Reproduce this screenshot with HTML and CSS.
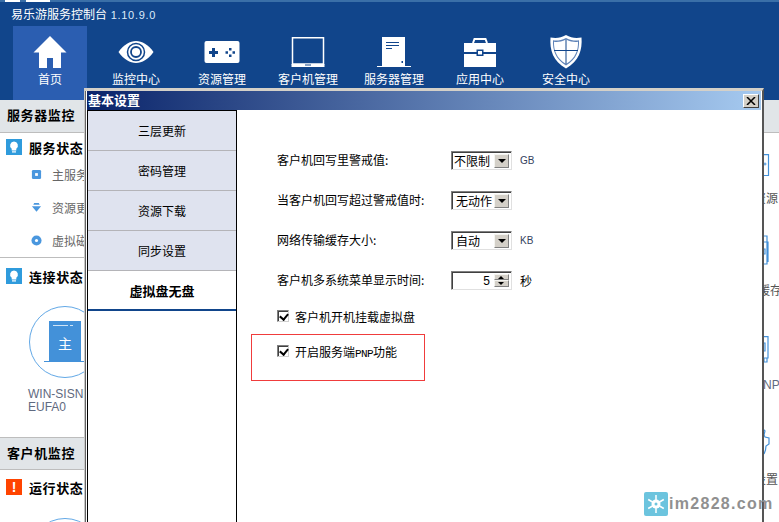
FILE: index.html
```html
<!DOCTYPE html>
<html lang="zh-CN">
<head>
<meta charset="utf-8">
<title>易乐游服务控制台</title>
<link rel="stylesheet" href="styles.css">
</head>
<body>
<div class="app">
  <header class="head">
    <div class="strip"><i class="strip-w a"></i><i class="strip-w b"></i></div>
    <div class="apptitle">易乐游服务控制台 <span class="ver">1.10.9.0</span></div>
    <nav class="nav">
      <a class="nav-item on">
        <svg class="nav-ic" viewBox="0 0 40 36"><path fill="#fff" d="M20 2 3.500 18.500H9V34H17V24H23V34H31V18.500H36.500Z"/></svg>
        <span>首页</span>
      </a>
      <a class="nav-item">
        <svg class="nav-ic" viewBox="0 0 40 36"><path fill="#fff" d="M2.500 18C8 10.500 14 7 20 7s12 3.500 17.500 11C32 25.500 26 29 20 29S8 25.500 2.500 18Z"/><circle cx="20" cy="18" r="8.500" fill="none" stroke="#11458b" stroke-width="1.500"/><circle cx="20" cy="18" r="5" fill="none" stroke="#11458b" stroke-width="1.800"/></svg>
        <span>监控中心</span>
      </a>
      <a class="nav-item">
        <svg class="nav-ic" viewBox="0 0 40 36"><rect x="2.500" y="7" width="35" height="22" rx="2" fill="#fff"/><path fill="#11458b" d="M10 14h3v3h3v3h-3v3h-3v-3H7v-3h3Z"/><path fill="#11458b" d="M27 14h2.500v2.500H27ZM27 20.500h2.500V23H27ZM23.500 17.300H26v2.500h-2.500ZM30.500 17.300H33v2.500h-2.500Z"/></svg>
        <span>资源管理</span>
      </a>
      <a class="nav-item">
        <svg class="nav-ic" viewBox="0 0 40 36"><path fill="none" stroke="#fff" stroke-width="1.500" d="M4.500 3.800H35.500V30H4.500Z"/><path fill="#fff" d="M3.500 30H36.500V33H3.500Z"/><path fill="#11458b" d="M17 30.500H23V31.500H17Z"/></svg>
        <span>客户机管理</span>
      </a>
      <a class="nav-item">
        <svg class="nav-ic" viewBox="0 0 40 36"><path fill="#fff" d="M8 3H31V32H8Z"/><path fill="#fff" d="M3 32H37V33H3Z"/><path fill="#11458b" d="M12 8H25V9H12ZM12 11H25V12H12ZM12 14H18V15H12ZM27.500 27H29V29H27.500Z"/></svg>
        <span>服务器管理</span>
      </a>
      <a class="nav-item">
        <svg class="nav-ic" viewBox="0 0 40 36"><path fill="none" stroke="#fff" stroke-width="2" d="M13 9 14.500 5H25.500L27 9"/><path fill="#fff" d="M4 9H36V18H23.500V15.500H16.500V18H4ZM4 20H16.500V22H23.500V20H36V33H4Z"/><path fill="#fff" d="M18 17H22V20.500H18Z"/></svg>
        <span>应用中心</span>
      </a>
      <a class="nav-item">
        <svg class="nav-ic" viewBox="0 0 40 36"><path fill="#fff" d="M20 1C25 4 30 4.500 35.500 3.500 36.500 16 33 27 20 34.500 7 27 3.500 16 4.500 3.500 10 4.500 15 4 20 1Z"/><path fill="#5f83b8" d="M20 4C25 6.500 29.500 7 33 6.300 33.500 16 30.500 25.500 20 31.500 9.500 25.500 6.500 16 7 6.300 10.500 7 15 6.500 20 4Z"/><path fill="#fff" d="M20 5.500C25 8 29 8.300 32 7.800 32.300 16 29.500 24.500 20 30 10.500 24.500 7.700 16 8 7.800 11 8.300 15 8 20 5.500Z"/><path fill="none" stroke="#11458b" stroke-width="1" d="M20 5.500V30M8 16.500H32"/></svg>
        <span>安全中心</span>
      </a>
    </nav>
  </header>

  <main class="main">
    <aside class="left">
      <h2 class="sec-head">服务器监控</h2>
      <section class="block first">
        <h3 class="status"><svg class="badge" viewBox="0 0 16 16"><rect width="16" height="16" fill="#2f9bdc"/><path fill="#fff" d="M8 2.500a4 4 0 0 1 2.300 7.200V11.500H5.700V9.700A4 4 0 0 1 8 2.500Z"/><rect x="6" y="12.300" width="4" height="1.200" fill="#fff"/></svg>服务状态</h3>
        <ul class="sub">
          <li><svg class="sub-ic" viewBox="0 0 12 12"><rect x="1" y="1" width="10" height="10" rx="1.500" fill="#4a97de"/><rect x="4.500" y="4.500" width="3" height="3" fill="#fff"/></svg>主服务</li>
          <li><svg class="sub-ic" viewBox="0 0 12 12"><path fill="#4a97de" d="M3.500 1H8.500L9.500 3H2.500ZM1 4.500H11L6 10.500Z"/></svg>资源更</li>
          <li><svg class="sub-ic" viewBox="0 0 12 12"><circle cx="6" cy="6" r="5.500" fill="#4a97de"/><circle cx="6" cy="6" r="1.700" fill="#fff"/></svg>虚拟磁</li>
        </ul>
      </section>
      <section class="block conn">
        <h3 class="status"><svg class="badge" viewBox="0 0 16 16"><rect width="16" height="16" fill="#2f9bdc"/><path fill="#fff" d="M8 2.500a4 4 0 0 1 2.300 7.200V11.500H5.700V9.700A4 4 0 0 1 8 2.500Z"/><rect x="6" y="12.300" width="4" height="1.200" fill="#fff"/></svg>连接状态</h3>
        <div class="srv">
          <svg class="srv-ic" viewBox="0 0 72 72"><circle cx="36" cy="36" r="35.500" fill="#fff" stroke="#62a8e6"/><rect x="20" y="15" width="32" height="40" fill="#4391d9"/><rect x="15" y="55" width="42" height="1" fill="#4391d9"/><path fill="#fff" d="M24 19H39V19.700H24ZM41 19H44V19.700H41Z"/><text x="36" y="43" class="srv-tx">主</text></svg>
          <p class="srv-name">WIN-SISNPF<br>EUFA0</p>
        </div>
      </section>
      <h2 class="sec-head second">客户机监控</h2>
      <section class="block run">
        <h3 class="status"><span class="badge alert">!</span>运行状态</h3>
        <div class="circle-peek"></div>
      </section>
    </aside>
    <div class="gap"></div>
    <aside class="peek">
      <div class="peek-head"></div>
      <div class="peek-item i1">
        <svg class="pk-ic" viewBox="0 0 16 24"><path fill="none" stroke="#4391d9" stroke-width="1.200" d="M0 .6H5.500V21.500H0"/><circle cx="2" cy="10" r="1" fill="none" stroke="#4391d9"/></svg>
        <span class="pk-tx">资源</span>
      </div>
      <div class="peek-item i2">
        <svg class="pk-ic tall" viewBox="0 0 16 32"><path fill="none" stroke="#4391d9" stroke-width="1.200" d="M0 1H4V29H0M0 7H5V27M0 14H2V19H0"/></svg>
        <span class="pk-tx">缓存</span>
      </div>
      <div class="peek-item i3">
        <svg class="pk-ic" viewBox="0 0 16 27"><path fill="none" stroke="#4391d9" stroke-width="1.200" d="M0 .6H5V22H0M0 7H2V15H0M1 22V26H4V22"/></svg>
        <span class="pk-tx latin">PNP</span>
      </div>
      <div class="peek-item i4">
        <svg class="pk-ic" viewBox="0 0 16 28"><path fill="none" stroke="#4391d9" stroke-width="1.200" d="M0 1 2 3 1 7 2 9 6 10V16L3 18 2.500 22 1 26"/></svg>
        <span class="pk-tx">设置</span>
      </div>
    </aside>
  </main>

  <section class="dialog">
    <div class="dlg-title">
      <span class="dlg-name">基本设置</span>
      <button class="dlg-close" type="button"><svg viewBox="0 0 10 8"><path fill="none" stroke="#000" stroke-width="1.500" d="M1 0 9 8M9 0 1 8"/></svg></button>
    </div>
    <div class="dlg-body">
      <ul class="tabs">
        <li>三层更新</li>
        <li>密码管理</li>
        <li>资源下载</li>
        <li>同步设置</li>
        <li class="active">虚拟盘无盘</li>
      </ul>
      <form class="form">
        <div class="row"><label class="lbl">客户机回写里警戒值:</label><span class="combo"><span class="val tightv">不限制</span><i class="drop"></i></span><span class="unit">GB</span></div>
        <div class="row"><label class="lbl">当客户机回写超过警戒值时:</label><span class="combo"><span class="val">无动作</span><i class="drop"></i></span></div>
        <div class="row"><label class="lbl">网络传输缓存大小:</label><span class="combo"><span class="val">自动</span><i class="drop"></i></span><span class="unit">KB</span></div>
        <div class="row"><label class="lbl">客户机多系统菜单显示时间:</label><span class="combo spin"><span class="val num">5</span><span class="spins"><i class="up"></i><i class="dn"></i></span></span><span class="unit cjk">秒</span></div>
        <div class="check c1"><i class="box"></i>客户机开机挂载虚拟盘</div>
        <div class="check c2"><i class="box"></i><span>开启服务端<span class="pnp">PNP</span>功能</span></div>
        <div class="annot"></div>
      </form>
    </div>
  </section>

  <div class="mark">
    <svg class="mark-ic" viewBox="0 0 24 24"><rect width="24" height="24" rx="2" fill="#6cc4de"/><g stroke="#fff" stroke-width="1.500"><path d="M12 3V21M4.200 7.500 19.800 16.500M19.800 7.500 4.200 16.500"/></g><circle cx="12" cy="12" r="4.500" fill="#fff"/><circle cx="12" cy="12" r="1.500" fill="#6cc4de"/></svg>
    <span>im2828.com</span>
  </div>
</div>
</body>
</html>
```
FILE: styles.css
```css
* { box-sizing: border-box; }
html, body { margin: 0; padding: 0; }
body { width: 779px; height: 522px; overflow: hidden; font-family: "Noto Sans CJK SC", "Liberation Sans", sans-serif; font-size: 12px; color: #000; background: #fff; }
h2, h3, p, ul { margin: 0; padding: 0; }
ul { list-style: none; }
.app { position: relative; width: 779px; height: 522px; overflow: hidden; }

.head { height: 100px; background: #11458b; color: #fff; display: flex; flex-direction: column; }
.strip { height: 2px; background: #3a6fa8; display: flex; flex: none; }
.strip-w { height: 2px; background: #fff; display: block; }
.strip-w.a { width: 15px; margin-left: 5px; }
.strip-w.b { width: 24px; margin-left: 6px; }
.apptitle { height: 24px; padding: 4px 0 0 11px; line-height: 16px; font-size: 12px; white-space: nowrap; flex: none; }
.ver { font-family: "Liberation Sans", sans-serif; font-size: 11px; letter-spacing: .7px; color: #dcebfa; margin-left: 1px; }
.nav { display: flex; padding-left: 13px; gap: 12px; height: 74px; flex: none; }
.nav-item { width: 74px; display: flex; flex-direction: column; align-items: center; padding-top: 8px; color: #fff; font-size: 12px; line-height: 16px; white-space: nowrap; }
.nav-item.on { background: #2b5eb1; }
.nav-ic { width: 40px; height: 36px; display: block; margin-bottom: 1px; }

.main { display: flex; height: 422px; overflow: hidden; }
.left { width: 84px; flex: none; overflow: hidden; }
.gap { flex: 1; }
.sec-head { height: 33px; background: #e1e5e8; border-bottom: 1px solid #bdbdbd; font-size: 13px; font-weight: 700; letter-spacing: .6px; line-height: 30px; padding-left: 7px; white-space: nowrap; width: 100px; }
.sec-head.second { border-top: 1px solid #bdbdbd; line-height: 29px; }
.block { padding: 5px 0 0 6px; width: 100px; }
.block.first { height: 125px; border-bottom: 1px solid #bdbdbd; }
.block.conn { height: 179px; padding-top: 9px; }
.block.run { height: 60px; padding-top: 8px; }
.status { display: flex; align-items: center; gap: 7px; height: 18px; font-size: 13px; letter-spacing: .6px; font-weight: 700; white-space: nowrap; }
.badge { width: 16px; height: 16px; flex: none; display: block; }
.alert { background: #ff4400; color: #fff; text-align: center; line-height: 16px; font-family: "Liberation Sans", sans-serif; font-size: 14px; letter-spacing: 0; }
.sub { padding: 10px 0 0 25px; display: flex; flex-direction: column; gap: 16px; }
.sub li { display: flex; align-items: center; gap: 10px; height: 17px; color: #666; white-space: nowrap; }
.sub-ic { width: 11px; height: 11px; flex: none; }
.srv { padding: 21px 0 0 23px; width: 130px; }
.srv-ic { width: 72px; height: 72px; display: block; }
.srv-tx { fill: #fff; font-size: 14px; text-anchor: middle; font-family: "Noto Sans CJK SC", sans-serif; }
.srv-name { margin: 10px 0 0 -1px; font-family: "Liberation Sans", sans-serif; font-size: 12px; line-height: 13px; color: #5f6a80; white-space: nowrap; }
.circle-peek { width: 72px; height: 72px; border: 1px solid #62a8e6; border-radius: 50%; margin: 22px 0 0 23px; }

.peek { width: 16px; flex: none; overflow: hidden; }
.peek-head { height: 33px; background: #e1e5e8; border-bottom: 1px solid #bdbdbd; }
.peek-item { display: flex; flex-direction: column; }
.pk-ic { width: 16px; height: 24px; display: block; }
.pk-ic.tall { height: 32px; }
.pk-tx { color: #555; white-space: nowrap; line-height: 16px; margin-left: -9px; }
.pk-tx.latin { font-family: "Liberation Sans", sans-serif; color: #5f6a80; margin-left: -8px; }
.i1 { padding-top: 21px; }
.i1 .pk-tx { margin-top: 12px; }
.i2 { padding-top: 29px; }
.i2 .pk-tx { margin-top: 15px; margin-left: -5px; }
.i3 { padding-top: 38px; }
.i3 .pk-ic { height: 27px; }
.i3 .pk-tx { margin-top: 14px; }
.i4 { padding-top: 35px; }
.i4 .pk-ic { height: 28px; }
.i4 .pk-tx { margin-top: 15px; }

.dialog { position: absolute; left: 84px; top: 88px; width: 680px; height: 434px; background: #fff; border-top: 3px solid #d4d0c8; border-left: 1px solid #c8c8c8; border-right: 2px solid #555; box-shadow: inset 1px 0 0 #666; padding: 0 0 0 2px; display: flex; flex-direction: column; }
.dlg-title { height: 19px; flex: none; margin-right: 1px; background: linear-gradient(90deg, #0a246a, #a6caf0); color: #fff; font-weight: 700; font-size: 13px; line-height: 18px; padding: 0 2px 0 1px; display: flex; justify-content: space-between; align-items: center; }
.dlg-name { margin-bottom: 2px; }
.dlg-close { width: 16px; height: 14px; padding: 0; background: #d4d0c8; border: 1px solid; border-color: #fff #404040 #404040 #fff; display: flex; align-items: center; justify-content: center; }
.dlg-close svg { width: 10px; height: 8px; display: block; }
.dlg-body { flex: 1; display: flex; min-height: 0; }
.tabs { width: 150px; flex: none; border: 1px solid #000; border-bottom: 0; background: #fff; }
.tabs li { height: 40px; background: #dfe3ef; border-bottom: 1px solid #b4b4b8; text-align: center; line-height: 40px; font-size: 12px; }
.tabs li.active { background: #fff; font-weight: 700; font-size: 13px; border-bottom: 2px solid #11458b; }

.form { position: relative; flex: 1; padding: 40px 0 0 40px; display: flex; flex-direction: column; }
.row { display: flex; align-items: center; height: 20px; margin-bottom: 20px; position: relative; }
.lbl { width: 174px; flex: none; white-space: nowrap; margin-bottom: 2px; }
.combo { width: 61px; height: 19px; background: #fff; border: 1px solid; border-color: #808080 #e0e0e0 #e0e0e0 #808080; box-shadow: inset 1px 1px 0 #404040; display: flex; justify-content: space-between; padding: 2px 2px 2px 4px; flex: none; }
.val { line-height: 14px; font-size: 12px; }
.val.tightv { margin-left: -2px; }
.val.num { margin-left: auto; padding-right: 4px; font-family: "Liberation Sans", sans-serif; }
.drop { width: 15px; height: 14px; background: #d4d0c8; border: 1px solid; border-color: #f4f4f0 #808080 #808080 #f4f4f0; position: relative; display: block; }
.drop::after { content: ""; position: absolute; left: 3px; top: 4px; border: 4px solid transparent; border-top: 4px solid #000; border-bottom: 0; }
.spin { padding-left: 2px; }
.spins { width: 15px; display: flex; flex-direction: column; flex: none; }
.spins i { height: 7px; background: #d4d0c8; border: 1px solid; border-color: #f4f4f0 #808080 #808080 #f4f4f0; position: relative; display: block; }
.spins .up::after { content: ""; position: absolute; left: 3px; top: 1px; border: 3.500px solid transparent; border-bottom: 3px solid #000; border-top: 0; }
.spins .dn::after { content: ""; position: absolute; left: 3px; top: 1px; border: 3.500px solid transparent; border-top: 3px solid #000; border-bottom: 0; }
.unit { margin-left: 8px; font-family: "Liberation Sans", sans-serif; font-size: 10px; color: #33415e; }
.unit.cjk { font-family: "Noto Sans CJK SC", sans-serif; font-size: 12px; color: #000; }
.check { display: flex; align-items: center; gap: 6px; height: 16px; white-space: nowrap; }
.check.c1 { margin-top: -2px; }
.check.c2 { margin-top: 19px; }
.pnp { font-family: "Liberation Mono", monospace; font-size: 11px; letter-spacing: -.6px; }
.box { width: 12px; height: 12px; background: #fff; border: 1px solid; border-color: #808080 #d0d0d0 #d0d0d0 #808080; box-shadow: inset 1px 1px 0 #404040; position: relative; display: block; flex: none; }
.box::after { content: ""; position: absolute; left: 3px; top: 1px; width: 4px; height: 6px; border: solid #000; border-width: 0 2px 2px 0; transform: rotate(40deg); }
.annot { position: absolute; left: 14px; top: 224px; width: 174px; height: 47px; border: 1px solid #f03c3c; }

.mark { position: absolute; left: 644px; top: 492px; display: flex; align-items: center; gap: 1px; }
.mark-ic { width: 24px; height: 24px; display: block; flex: none; }
.mark span { font-family: "Liberation Sans", sans-serif; font-size: 16px; font-weight: 700; letter-spacing: 1.300px; color: #909090; white-space: nowrap; }
```
